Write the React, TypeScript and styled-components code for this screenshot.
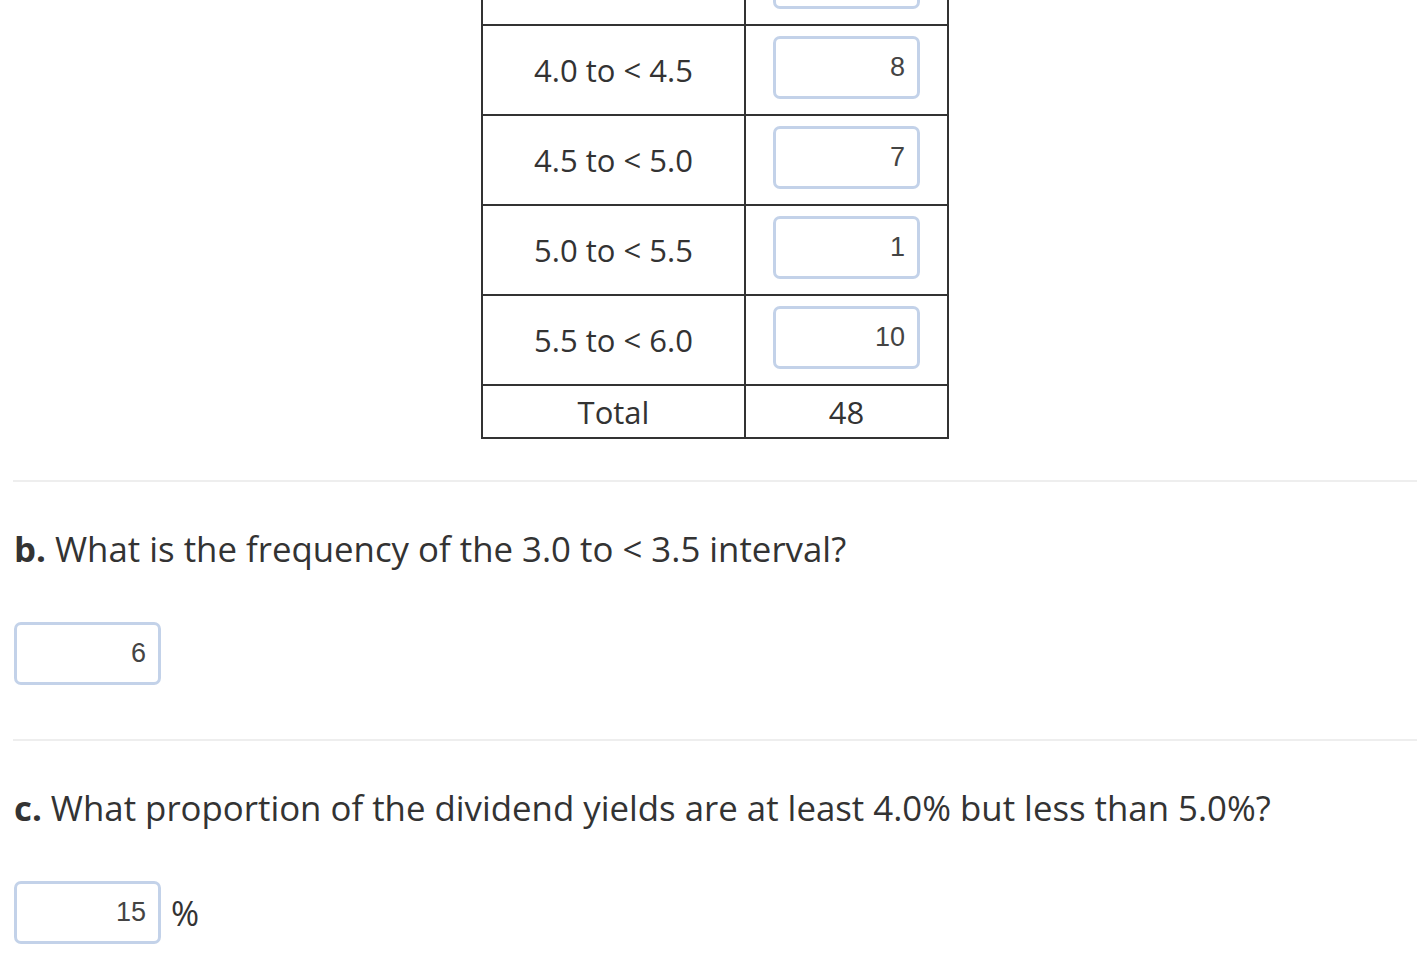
import * as React from "react";
import styled, { createGlobalStyle } from "styled-components";

const GlobalStyle = createGlobalStyle`
  html, body {
    margin: 0;
    padding: 0;
    background: #fff;
    overflow: hidden;
  }
  body {
    font-family: "Open Sans", "Liberation Sans", sans-serif;
    color: #333;
  }
`;

interface IRow {
  label: string;
  value: string;
}

const rows: IRow[] = [
  { label: "3.5 to < 4.0", value: "12" },
  { label: "4.0 to < 4.5", value: "8" },
  { label: "4.5 to < 5.0", value: "7" },
  { label: "5.0 to < 5.5", value: "1" },
  { label: "5.5 to < 6.0", value: "10" }
];

export default function App() {
  return (
    <Page>
      <GlobalStyle />
      <TableWrap>
        <FreqTable>
          <tbody>
            {rows.map((row) => (
              <tr key={row.label}>
                <LabelCell>{row.label}</LabelCell>
                <InputCell>
                  <NumInput value={row.value} readOnly />
                </InputCell>
              </tr>
            ))}
            <tr>
              <TotalCell>Total</TotalCell>
              <TotalCell>48</TotalCell>
            </tr>
          </tbody>
        </FreqTable>
      </TableWrap>

      <Divider />

      <Question>
        <strong>b.</strong> What is the frequency of the 3.0 to &lt; 3.5 interval?
      </Question>
      <AnswerRow>
        <NumInput value="6" readOnly />
      </AnswerRow>

      <Divider $gap={54} />

      <Question>
        <strong>c.</strong> What proportion of the dividend yields are at least 4.0% but less than 5.0%?
      </Question>
      <AnswerRow>
        <NumInput value="15" readOnly />
        <Unit>%</Unit>
      </AnswerRow>
    </Page>
  );
}

const Page = styled.div`
  margin: -66px 7px 0 13px;
  display: flex;
  flex-direction: column;
`;

const TableWrap = styled.div`
  display: flex;
  justify-content: center;
`;

const FreqTable = styled.table`
  border-collapse: collapse;
  font-size: 31px;
  color: #333;

  td {
    border: 2px solid #333;
    text-align: center;
    padding: 0;
  }
`;

const LabelCell = styled.td`
  width: 261px;
  height: 88px;
  line-height: 1.3;
`;

const InputCell = styled.td`
  width: 201px;
  vertical-align: top;
  && {
    padding-top: 10px;
  }
`;

const TotalCell = styled.td`
  height: 51px;
`;

const NumInput = styled.input`
  box-sizing: border-box;
  width: 147px;
  height: 63px;
  border: 3px solid #c3d2e9;
  border-radius: 7px;
  padding: 0 12px 0 8px;
  text-align: right;
  font-family: "Liberation Sans", Arial, sans-serif;
  font-size: 27px;
  color: #444;
  background: #fff;
  outline: none;
  vertical-align: top;
`;

const Divider = styled.hr<{ $gap?: number }>`
  margin: ${(p) => p.$gap ?? 41}px 0 0;
  border: 0;
  height: 2px;
  background: #eeeeee;
`;

const Question = styled.p`
  margin: 45px 0 0 1px;
  font-size: 34.8px;
  line-height: 44px;
  color: #333;

  strong {
    font-weight: 700;
  }
`;

const AnswerRow = styled.div`
  display: flex;
  align-items: center;
  gap: 10px;
  margin: 51px 0 0 1px;
`;

const Unit = styled.span`
  font-size: 34px;
  color: #333;
`;
